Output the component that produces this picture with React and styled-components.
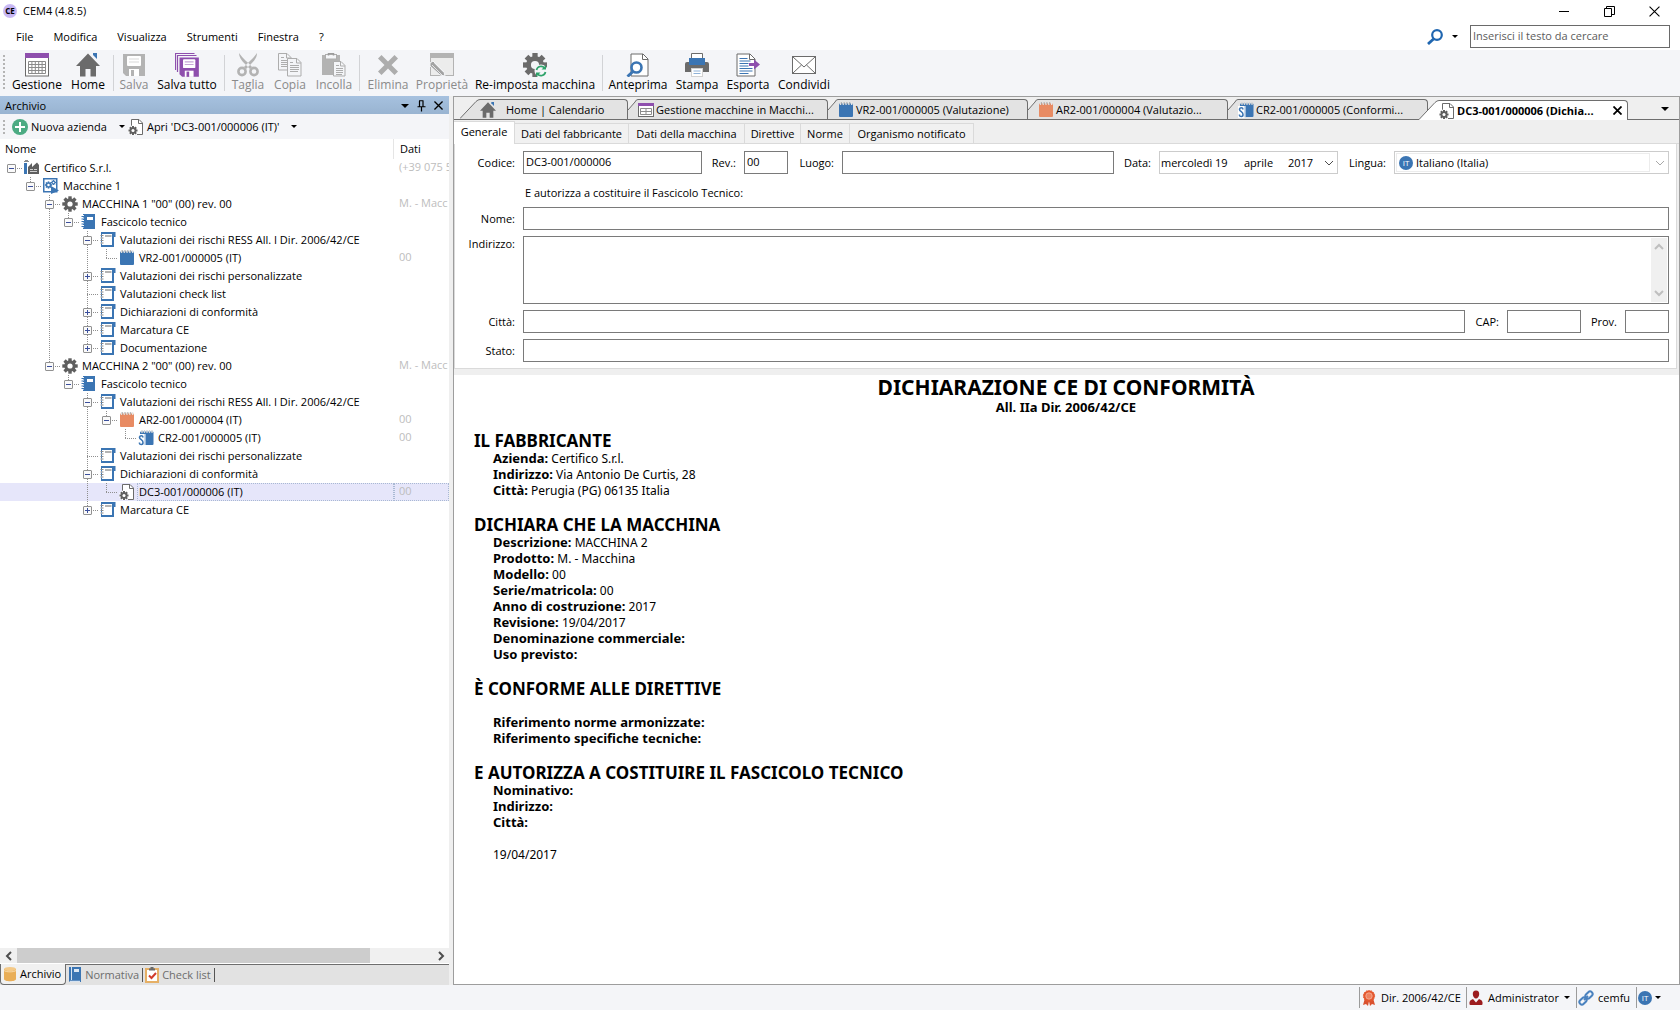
import { useState } from "react";
import styled, { createGlobalStyle, css } from "styled-components";

const UI_FONT = '"Open Sans", "Noto Sans", sans-serif';
const DOC_FONT = '"Noto Sans", "DejaVu Sans", sans-serif';

const BLUE = '#3b75b3';
const GREY = '#6b6b6b';
const LIGHT = '#b3b3b3';
const PURPLE = '#8e4fad';

const GlobalStyle = createGlobalStyle`
  *, *::before, *::after { box-sizing: border-box; }
  body {
    margin: 0;
    font: 11px/16px ${UI_FONT};
    color: #000;
    background: #fff;
  }
  button, input, textarea, select {
    font: inherit;
    color: inherit;
    margin: 0;
    padding: 0;
    border: 0;
    border-radius: 0;
    background: none;
    outline: none;
  }
  button { cursor: default; white-space: nowrap; }
  svg { display: block; flex: none; }
`

/* ---------- icons ---------- */

function Svg({ s = 16, w, h, box, children }){
  return (
    <svg width={w || s} height={h || s} viewBox={box || `0 0 ${w || s} ${h || s}`} fill="none" aria-hidden="true">
      {children}
    </svg>
  );
}

// cx, cy : centro, r : raggio esterno
function GearShape({ cx, cy, r, hole = '#fff', fill = '#5f5f5f' }){
  return (
    <g fill={fill}>
      {[0, 45, 90, 135].map((a) => (
        <rect key={a} x={cx - r * 0.22} y={cy - r} width={r * 0.44} height={r * 2} transform={`rotate(${a} ${cx} ${cy})`} />
      ))}
      <circle cx={cx} cy={cy} r={r * 0.74} />
      <circle cx={cx} cy={cy} r={r * 0.34} fill={hole} />
    </g>
  );
}

const CalendarIcon = () => (
  <Svg s={24}>
    <rect x="0.5" y="0.5" width="23" height="22.5" fill="#fff" stroke={GREY} />
    <rect width="24" height="5" fill={PURPLE} />
    <path d="M3.5 8.5h17v12h-17zM3.5 11.5h17M3.5 14.5h17M3.5 17.5h17M6.9 8.5v12M10.3 8.5v12M13.7 8.5v12M17.1 8.5v12" stroke="#8b8b8b" />
  </Svg>
)

const HomeIcon = ({ s = 24 }) => (
  <Svg s={s} box="0 0 24 24">
    <path d="M17 0h4v6l-4-4z" fill={BLUE} />
    <path d="M12 0.5L24 13h-4v10.5h-5.500V16h-5v7.500H4V13H0z" fill={GREY} />
  </Svg>
)

const Floppy = ({ color, x = 0, y = 0, k = 1 }) => (
  <g transform={`translate(${x} ${y}) scale(${k})`}>
    <path d="M0 0h22v22H3l-3-3z" fill={color} />
    <rect x="4" y="2" width="14" height="10" rx="1" fill="#fff" />
    <path d="M6 5h10M6 8h10" stroke={color} strokeOpacity="0.5" strokeWidth="1.2" />
    <rect x="6" y="15" width="10" height="7" fill="#fff" />
    <rect x="8" y="16" width="3" height="6" fill={color} />
  </g>
)

const SaveIcon = () => <Svg s={24}><Floppy color={LIGHT} x={1} y={1} /></Svg>

const SaveAllIcon = () => (
  <Svg s={24}>
    <path d="M0.500 17V0.500h19M2.500 19V2.500h19" stroke={PURPLE} strokeWidth="1.200" />
    <Floppy color={PURPLE} x={4.500} y={4.500} k={0.880} />
  </Svg>
)

const CutIcon = () => (
  <Svg s={24}>
    <path d="M3 0c0 4 2 7 6 11l5 5 2-2C12 9 7 6 3 0zM21 0c0 4-2 7-6 11l-5 5-2-2c4-5 9-8 13-14z" fill={LIGHT} />
    <circle cx="6" cy="18.500" r="3.600" stroke={LIGHT} strokeWidth="2.600" />
    <circle cx="18" cy="18.500" r="3.600" stroke={LIGHT} strokeWidth="2.600" />
  </Svg>
)

const Sheet = ({ x, y, w = 13, h = 17 }) => (
  <g transform={`translate(${x} ${y})`}>
    <path d={`M0.500 0.500H${w - 4}L${w} 4.500V${h}H0.500z`} fill="#f4f5f8" stroke="#adadad" />
    <path d={`M${w - 4.500} 0.500v4.500h4.500M3 7.500h${w - 5}M3 9.500h${w - 5}M3 11.500h${w - 5}M3 13.500h${w - 6}M3 4.500h3`} stroke="#adadad" />
  </g>
)

const CopyIcon = () => <Svg s={24}><Sheet x={0} y={0} /><Sheet x={9} y={5} w={14} h={18} /></Svg>

const PasteIcon = () => (
  <Svg s={24}>
    <rect x="0" y="2" width="18" height="20" fill={LIGHT} />
    <rect x="3.500" y="1.500" width="11" height="4.500" fill="#f4f5f8" stroke="#adadad" />
    <path d="M6.500 2.500V0.500h5v2" stroke="#9b9b9b" strokeWidth="1.500" />
    <Sheet x={11} y={8} w={12} h={15} />
  </Svg>
)

const DeleteIcon = () => (
  <Svg s={24}>
    <path d="M5.500 2L12 8.500 18.500 2 22 5.500 15.500 12 22 18.500 18.500 22 12 15.500 5.500 22 2 18.500 8.500 12 2 5.500z" fill="#adadad" />
  </Svg>
)

const PropertiesIcon = () => (
  <Svg s={24}>
    <rect x="0.500" y="0.500" width="23" height="22" fill="#ececec" stroke={LIGHT} />
    <rect width="24" height="5" fill={LIGHT} />
    <path d="M0 10l3-2 11 11 1 4-5-1L0 13z" fill="#a3a3a3" stroke="#f4f5f8" />
    <path d="M2 12l10 10M4.500 10l9 9" stroke="#f4f5f8" strokeWidth="0.800" />
  </Svg>
)

const ResetIcon = () => (
  <Svg s={24}>
    <GearShape cx={12} cy={12} r={12} hole="#f4f5f8" fill={GREY} />
    <circle cx="18" cy="18" r="6.500" fill="#f4f5f8" />
    <path d="M13.500 17a4.600 4.600 0 0 1 8-2M22.500 19a4.600 4.600 0 0 1-8 2" stroke="#2fa36b" strokeWidth="1.700" />
    <path d="M23 12v4.500h-4.500zM13 24v-4.500h4.500z" fill="#2fa36b" />
  </Svg>
)

const PreviewIcon = () => (
  <Svg s={24}>
    <path d="M5 1h12l5 5v17H5z" fill="#fff" stroke={GREY} />
    <path d="M16.500 1v5.500H22" stroke={GREY} />
    <circle cx="10.500" cy="14.500" r="5" fill="#fff" stroke={BLUE} strokeWidth="2.600" />
    <path d="M7 18.500L1.500 23.500" stroke={BLUE} strokeWidth="3" />
  </Svg>
)

const PrintIcon = () => (
  <Svg s={24}>
    <path d="M6.500 6V0.500h11V6" fill="#fff" stroke={GREY} />
    <path d="M2 9h20q2 0 2 2v8H0v-8q0-2 2-2z" fill={GREY} />
    <rect x="4" y="5" width="16" height="7" fill={BLUE} />
    <rect x="6.500" y="15.500" width="11" height="8" fill="#fff" stroke="#d2d2d2" />
    <path d="M8.500 18h7M8.500 20.500h7" stroke="#8fb2d8" />
  </Svg>
)

const ExportIcon = () => (
  <Svg s={24}>
    <path d="M1 1h13l5 5v17H1z" fill="#fff" stroke={GREY} />
    <path d="M13.500 1v5.500H19" stroke={GREY} />
    <path d="M3.500 5.500h8M3.500 8h11M3.500 10.500h9M3.500 13h9M3.500 15.500h13M3.500 18h13M3.500 20.500h9" stroke={BLUE} />
    <path d="M13 10h5V6.500l6 5-6 5V13h-5z" fill={PURPLE} />
  </Svg>
)

const MailIcon = () => (
  <Svg s={24}>
    <rect x="0.500" y="3.500" width="23" height="17" fill="#fff" stroke={GREY} />
    <path d="M1 4l11 10L23 4M1 20l8.500-8M23 20l-8.500-8" stroke={GREY} />
  </Svg>
)

const SearchIcon = () => (
  <Svg s={16}>
    <circle cx="10" cy="6" r="4.800" stroke="#1f66b0" strokeWidth="2.200" />
    <path d="M6.500 10L1 15" stroke="#1f66b0" strokeWidth="2.800" />
  </Svg>
)

const PlusIcon = () => (
  <Svg s={16}>
    <circle cx="8" cy="8" r="8" fill="#4cab83" />
    <path d="M8 3v10M3 8h10" stroke="#fff" strokeWidth="2" />
  </Svg>
)

const DocGearIcon = () => (
  <Svg s={16}>
    <path d="M3.500 8V0.500h7.500L14.500 4v11.500H9" fill="#fff" stroke={GREY} />
    <path d="M10.500 0.500V4.500h4" stroke={GREY} />
    <circle cx="5" cy="11.500" r="5" fill="#fff" />
    <GearShape cx={5} cy={11.500} r={4.500} />
  </Svg>
)

const FactoryIcon = () => (
  <Svg s={16}>
    <rect x="0" y="3" width="3" height="11" fill={BLUE} />
    <path d="M0 1.500h5M1 0.500h3" stroke="#8d8d8d" />
    <path d="M4 14V7l4-4v4l5-4.500L15 5v9z" fill="#5f5f5f" />
    <path d="M6 9.500h3M10 9.500h3M6 11.500h7" stroke="#cfcfcf" />
  </Svg>
)

const MachinesIcon = () => (
  <Svg s={16}>
    <rect x="0.750" y="0.750" width="13" height="13" fill="#fff" stroke={BLUE} strokeWidth="1.500" />
    <GearShape cx={5.500} cy={7} r={3.600} fill={BLUE} />
    <GearShape cx={10.500} cy={4.500} r={2.500} fill={BLUE} />
    <path d="M8 8l8 4.500L8 16z" fill={BLUE} />
  </Svg>
)

const GearIcon = () => <Svg s={16}><GearShape cx={8} cy={8} r={7.700} /></Svg>

const BookIcon = () => (
  <Svg s={16}>
    <rect x="2" y="0" width="12" height="15" fill={BLUE} />
    <path d="M2.500 1v13" stroke="#fff" strokeDasharray="1.500 1" />
    <path d="M0.500 2.500h3M0.500 5h3M0.500 7.500h3M0.500 10h3M0.500 12.500h3" stroke={BLUE} />
    <rect x="6" y="3" width="6" height="3" fill="#fff" />
  </Svg>
)

const NotebookIcon = () => (
  <Svg s={16}>
    <path d="M1 0h14.500v5H14v10H1z" fill={BLUE} />
    <path d="M2 2h10v11H2z" fill="#fff" />
    <path d="M0 3h3.500v1H0zM0 5.500h3.500v1H0zM0 8h3.500v1H0zM0 10.500h3.500v1H0z" fill="#fff" />
    <path d="M0.500 3.500h3M0.500 6h3M0.500 8.500h3M0.500 11h3" stroke="#8a8a8a" />
    <path d="M5 4h6.500" stroke="#9a9a9a" strokeWidth="1.500" />
  </Svg>
)

const NotepadIcon = ({ color = BLUE }) => (
  <Svg s={16}>
    <rect x="1" y="1.500" width="14" height="13.500" rx="1" fill={color} />
    <path d="M2.500 0v3M5.300 0v3M8.100 0v3M10.900 0v3M13.700 0v3" stroke="#e9e9e9" strokeWidth="1.300" />
    <path d="M3.300 0v2.500M6.100 0v2.500M8.900 0v2.500M11.700 0v2.500" stroke="#8d8d8d" strokeWidth="0.700" />
  </Svg>
)

const CorrectedIcon = () => (
  <Svg s={16}>
    <rect x="2" y="1.500" width="13.500" height="13.500" rx="1" fill={BLUE} />
    <path d="M4 0v3M6.500 0v3M9 0v3M11.500 0v3M14 0v3" stroke="#d5d5d5" strokeWidth="1.300" />
    <rect x="0" y="4" width="6.500" height="12" fill="#fff" />
    <path d="M4.800 7.500V6.800Q4.800 5.800 3.300 5.800T1.500 7.200Q1.500 8.500 3.300 9.700T5 12.800Q5 14.500 3.300 14.500T1.500 13.500V12.500" stroke={BLUE} strokeWidth="1.600" />
    <path d="M7 4v11" stroke="#fff" />
  </Svg>
)

const GridIcon = () => (
  <Svg s={16}>
    <rect x="0.500" y="1.500" width="15" height="13" fill="#fff" stroke={GREY} />
    <rect x="0" y="1" width="16" height="3" fill={PURPLE} />
    <path d="M2.500 6.500h11v6h-11zM2.500 9.500h11M8 6.500v6" stroke="#8d8d8d" />
  </Svg>
)

const DrumIcon = () => (
  <Svg w={14} h={16}>
    <path d="M1 3v10c0 3 12 3 12 0V3z" fill="#e9ae57" />
    <ellipse cx="7" cy="3" rx="6" ry="2" fill="#f4c987" />
    <path d="M1 4.500c2 1.800 10 1.800 12 0" stroke="#fbe3bd" strokeWidth="0.800" />
  </Svg>
)

const RulesIcon = () => (
  <Svg w={14} h={16}>
    <path d="M1 0h12v15H2.500Q1 15 1 13.500z" fill={BLUE} />
    <path d="M3.500 0v13" stroke="#fff" strokeWidth="0.800" />
    <path d="M2 14.300h10" stroke="#fff" strokeWidth="1" />
    <rect x="6" y="2" width="5" height="3" fill="#dce7f3" />
  </Svg>
)

const ChecklistIcon = () => (
  <Svg w={14} h={16}>
    <rect x="1" y="2" width="12" height="13" fill="#fff" stroke="#e6b066" strokeWidth="2" />
    <path d="M4 1.500h6V3.500H4z" fill={GREY} /><path d="M5.500 0h3v2h-3z" fill={GREY} />
    <path d="M4 8.500l2.500 2.500L11 6" stroke="#d13b2c" strokeWidth="2" />
  </Svg>
)

const RibbonIcon = () => (
  <Svg w={14} h={16}>
    <path d="M3 8l-2 7 3-1 2 2 1-5 1 5 2-2 3 1-2-7z" fill="#d9512f" />
    <circle cx="7" cy="6" r="5.600" fill="#e4572e" stroke="#e4572e" strokeDasharray="1.500 1" />
    <circle cx="7" cy="6" r="3.200" fill="#ee8260" stroke="#f6b39c" strokeWidth="0.800" />
  </Svg>
)

const UserIcon = () => (
  <Svg w={14} h={16}>
    <path d="M7 0.500c2.300 0 3.400 1.600 3.200 3.800C10 6.800 8.600 8.500 7 8.500S4 6.800 3.800 4.300C3.600 2.100 4.700 0.500 7 0.500z" fill="#9c1c1f" />
    <path d="M0.500 12q0.300-2 3.500-3l3 3.500L10 9q3.200 1 3.500 3v2q0 1-1 1h-11q-1 0-1-1z" fill="#9c1c1f" />
  </Svg>
)

const LinkIcon = () => (
  <Svg s={16}>
    <g stroke="#4a82bf" strokeWidth="2">
      <rect x="7" y="2.500" width="8" height="5" rx="2.500" transform="rotate(-45 11 5)" />
      <rect x="1" y="8.500" width="8" height="5" rx="2.500" transform="rotate(-45 5 11)" />
      <path d="M6 10l4-4" />
    </g>
  </Svg>
)

const PinIcon = () => (
  <Svg w={9} h={12}>
    <path d="M2.500 1v5.500M2 0.750h4.500M6 1v5.500M0.500 6.750h8M4.500 7v4.500" stroke="#000" strokeWidth="1.200" />
  </Svg>
)

const CrossIcon = ({ s = 9, t = 1.500 }) => (
  <Svg s={s} box="0 0 10 10"><path d="M0.500 0.500l9 9M9.500 0.500l-9 9" stroke="#000" strokeWidth={t} /></Svg>
)

const Chevron = ({ dir = 'down', color = '#4d4d4d', t = 1 }) => {
  const turn = { down: 0, left: 90, up: 180, right: 270 }[dir];
  return (
    <Svg s={10}><path d="M1 3l4 4 4-4" stroke={color} strokeWidth={t} transform={`rotate(${turn} 5 5)`} /></Svg>
  );
}

const Caret = styled.span`
  flex: none;
  width: 0;
  height: 0;
  border: solid transparent;
  border-width: ${props => props.$big ? '4px 4px 0' : '3px 3px 0'};
  border-top-color: #000;
`

const Flag = styled.span`
  flex: none;
  width: 14px;
  height: 14px;
  border-radius: 50%;
  background: ${BLUE};
  color: #fff;
  font: 8px/14px ${UI_FONT};
  text-align: center;
`

/* ---------- window ---------- */

const Window = styled.div`
  display: flex;
  flex-direction: column;
  min-height: 100vh;
  background: #fff;
`

const TitleBar = styled.header`
  display: flex;
  align-items: center;
  gap: 6px;
  height: 22px;
  padding: 0 3px;
`

const AppLogo = styled.span`
  width: 14px;
  height: 14px;
  border-radius: 50%;
  background: radial-gradient(#b9a5ef, #d3c6f7);
  font: bold 8px/14px ${UI_FONT};
  text-align: center;
`

const WindowTitle = styled.h1`
  flex: 1;
  margin: 0;
  font-size: 11px;
  font-weight: normal;
`

const WindowButtons = styled.div`
  display: flex;
`

const WindowButton = styled.button`
  display: grid;
  place-items: center;
  width: 45px;
  height: 20px;
`

const MenuBar = styled.nav`
  display: flex;
  align-items: center;
  height: 28px;
  padding: 1px 10px 0 16px;
`

const MenuList = styled.div`
  flex: 1;
  display: flex;
  gap: 20px;
`

const SearchButton = styled.button`
  display: flex;
  align-items: center;
  gap: 9px;
  margin-right: 12px;
`

const SearchInput = styled.input`
  width: 200px;
  height: 23px;
  padding: 0 2px 3px;
  border: 1px solid #6a6a6a;
  &::placeholder { color: #5c5c5c; opacity: 1; }
`

const Toolbar = styled.div`
  display: flex;
  align-items: center;
  height: 46px;
  padding-left: 3px;
  background: #f4f5f8;
`

const Grip = styled.span`
  flex: none;
  width: 2px;
  height: ${props => props.$h}px;
  margin-right: 4px;
  background: repeating-linear-gradient(#b4b4b4 0 2px, transparent 2px 4px);
`

const ToolSeparator = styled.span`
  width: 1px;
  height: 36px;
  margin: 0 2px;
  background: #d2d3d6;
`

const ToolButton = styled.button`
  display: flex;
  flex-direction: column;
  align-items: center;
  width: ${props => props.$w}px;
  font-size: 12px;
  color: #000;
  &:disabled { color: #8a8a8a; }
`

const Workspace = styled.main`
  flex: 1;
  display: flex;
  gap: 4px;
  background: #efefef;
`

/* ---------- archivio ---------- */

const Side = styled.aside`
  flex: none;
  display: flex;
  flex-direction: column;
  width: 449px;
  background: #fff;
`

const SideHeader = styled.div`
  display: flex;
  align-items: center;
  gap: 8px;
  height: 18px;
  padding: 1px 6px 0 5px;
  background: linear-gradient(#a6c1df, #99b4d1);
  h2 {
    flex: 1;
    margin: 0;
    font-size: 11px;
    font-weight: normal;
  }
  button { display: grid; place-items: center; }
`

const SideTools = styled.div`
  display: flex;
  align-items: center;
  gap: 3px;
  height: 25px;
  padding-left: 3px;
  background: #f4f5f8;
`

const SideTool = styled.button`
  display: flex;
  align-items: center;
  gap: 3px;
  ${Caret} { margin-left: 9px; }
`

const Tree = styled.div`
  flex: 1;
  overflow: hidden;
`

const TreeLine = styled.div`
  display: grid;
  grid-template-columns: 394px 1fr;
`

const TreeHead = styled(TreeLine)`
  height: 20px;
  line-height: 20px;
  span:first-child { padding-left: 5px; border-right: 1px solid #e5e5e5; }
  span:last-child { padding-left: 6px; }
`

const dots = (dir) => css`repeating-linear-gradient(${dir}, #8f8f8f 0 1px, transparent 1px 2px)`

const TreeRow = styled(TreeLine)`
  height: 18px;
  background: ${props => props.$selected ? '#e6e6fa' : 'none'};
`

const NameCell = styled.div`
  display: flex;
  align-items: center;
  padding-left: 2px;
  white-space: nowrap;
`

const Guide = styled.span`
  flex: none;
  width: 19px;
  height: 18px;
  background: ${props => props.$on ? css`${dots('to bottom')} 9px 0 / 1px 18px no-repeat` : 'none'};
`

const Joint = styled.span`
  flex: none;
  display: flex;
  align-items: center;
  width: 22px;
  height: 18px;
  padding-left: 5px;
  background:
    ${dots('to right')} 9px 9px / 11px 1px no-repeat,
    ${dots('to bottom')} 9px ${props => props.$first ? 9 : 0}px / 1px ${props => (props.$last ? 9 : 18) - (props.$first ? 9 : 0)}px no-repeat;
`

const Expander = styled.button`
  display: grid;
  place-items: center;
  width: 9px;
  height: 9px;
  border: 1px solid #919191;
  border-radius: 1px;
  background: #fafafa;
`

const NodeName = styled.span`
  flex: 1;
  align-self: stretch;
  margin-left: 2px;
  padding-left: 2px;
  line-height: 18px;
  outline: ${props => props.$selected ? '1px dotted #a9b9d3' : 'none'};
  outline-offset: -1px;
`

const DataCell = styled.div`
  padding-left: 5px;
  overflow: hidden;
  line-height: 16px;
  color: #bdbdbd;
  white-space: nowrap;
  outline: ${props => props.$selected ? '1px dotted #a9b9d3' : 'none'};
  outline-offset: -1px;
`

const ScrollTrack = styled.div`
  display: flex;
  height: 15px;
  background: #f0f0f0;
  button { display: grid; place-items: center; width: 17px; }
`

const ScrollRail = styled.div`
  flex: 1;
  &::before {
    content: "";
    display: block;
    width: 85%;
    height: 100%;
    background: #cdcdcd;
  }
`

const SideTabs = styled.div`
  display: flex;
  height: 21px;
  margin-top: 1px;
  border-top: 1px solid #6e6e6e;
  background: #e2e2e2;
`

const SideTab = styled.button`
  display: flex;
  align-items: center;
  gap: 3px;
  padding: 0 4px 0 2px;
  color: #6d6d6d;
  position: relative;
  &::after {
    content: "";
    position: absolute;
    right: 0;
    top: 3px;
    width: 1px;
    height: 14px;
    background: #555;
  }
  ${props => props.$active && css`
    margin-top: -1px;
    color: #000;
    background: #f1f1f1;
    border: 1px solid #6e6e6e;
    border-top: 0;
    border-radius: 0 0 4px 4px;
    &::after { display: none; }
  `}
`

/* ---------- documenti ---------- */

const Editor = styled.section`
  flex: 1;
  min-width: 0;
  display: flex;
  flex-direction: column;
  border: 1px solid #9d9d9d;
  background: #fff;
`

const DocTabs = styled.div`
  display: flex;
  align-items: flex-end;
  height: 23px;
  padding-left: 6px;
  border-bottom: 1px solid #6e6e6e;
  background: #efefef;
`

const DocTab = styled.div`
  flex: 0 1 ${props => props.$w}px;
  min-width: 0;
  display: flex;
  height: 20px;
  ${props => props.$active && css`
    position: relative;
    margin: 0 0 -1px -9px;
    font-weight: bold;
    z-index: 1;
  `}
`

const DocTabBody = styled.div`
  flex: 1;
  min-width: 0;
  display: flex;
  align-items: center;
  padding-right: 5px;
  border: 1px solid #6e6e6e;
  border-width: 1px 1px 0 0;
  border-radius: 0 4px 0 0;
  background: ${props => props.$active ? '#fff' : '#e3e3e3'};
`

const DocTabName = styled.button`
  flex: 1;
  min-width: 0;
  display: flex;
  align-items: center;
  gap: ${props => props.$gap || 2}px;
  overflow: hidden;
  font-weight: inherit;
`

const TabMenu = styled.button`
  display: grid;
  place-items: center;
  width: 28px;
  height: 20px;
  margin-left: auto;
`

const Pages = styled.div`
  display: flex;
  align-items: flex-end;
  height: 24px;
  background: #efefef;
`

const PageTab = styled.button`
  width: ${props => props.$w}px;
  height: ${props => props.$active ? 23 : 21}px;
  border: 1px solid #dadada;
  border-width: 1px 1px 1px 0;
  background: #f1f1f1;
  ${props => props.$active && css`
    padding-bottom: 2px;
    background: #fff;
    border-bottom: 0;
  `}
`

const PagesRest = styled.span`
  flex: 1;
  border-bottom: 1px solid #dadada;
`

const FormArea = styled.div`
  padding: 0 2px 6px 0;
  background: #efefef;
`

const Form = styled.form`
  display: flex;
  flex-direction: column;
  gap: 6px;
  padding: 7px 7px 6px 1px;
  border: 1px solid #dadada;
  border-top: 0;
  background: #fff;
`

const FormRow = styled.div`
  display: flex;
  align-items: center;
  gap: 8px;
`

const Label = styled.label`
  flex: none;
  width: ${props => props.$w || 59}px;
  align-self: ${props => props.$top ? 'flex-start' : 'auto'};
  display: flex;
  justify-content: flex-end;
  white-space: nowrap;
`

const Hint = styled.p`
  margin: 5px 0 0 69px;
  line-height: 16px;
`

const Field = styled.input`
  flex: ${props => props.$w ? `0 0 ${props.$w}px` : '1 1 0'};
  min-width: 0;
  height: 23px;
  padding: 0 2px 2px;
  border: 1px solid #7a7a7a;
  background: #fff;
`

const AreaBox = styled.div`
  flex: 1;
  display: flex;
  height: 68px;
  padding: 1px;
  border: 1px solid #7a7a7a;
`

const Area = styled.textarea`
  flex: 1;
  resize: none;
`

const AreaScroll = styled.div`
  display: flex;
  flex-direction: column;
  justify-content: space-between;
  align-items: center;
  width: 16px;
  padding: 4px 0;
  background: #f0f0f0;
`

const PickerBox = styled.div`
  flex: none;
  display: flex;
  align-items: center;
  width: ${props => props.$w}px;
  height: 23px;
  padding: 0 3px 0 1px;
  border: 1px solid #cccccc;
  background: #fff;
`

const DatePart = styled.input`
  width: ${props => props.$w}px;
  min-width: 0;
`

const LangInner = styled.div`
  flex: 1;
  display: flex;
  align-items: center;
  gap: 3px;
  height: 19px;
  margin-right: 5px;
  padding-left: 2px;
  border: 1px solid #ececec;
`

const LangSelect = styled.select`
  flex: 1;
  appearance: none;
`

const Report = styled.article`
  flex: 1;
  padding: 0 21px 16px 20px;
  font: 12px/16px ${DOC_FONT};
  b {
    font-size: 13px;
    line-height: 14px;
  }
`

const ReportTitle = styled.h2`
  margin: 0;
  font-size: 21px;
  line-height: 24px;
  text-align: center;
`

const ReportSub = styled.p`
  margin: 0 0 16px;
  font-size: 13px;
  font-weight: bold;
  text-align: center;
`

const ReportSection = styled.section`
  margin-bottom: 16px;
  h3 {
    margin: 0 0 ${props => props.$space ? 16 : 0}px;
    font-size: 17px;
    line-height: 20px;
  }
  p { margin: 0 0 0 19px; }
`

/* ---------- barra di stato ---------- */

const StatusBar = styled.footer`
  display: flex;
  justify-content: flex-end;
  align-items: center;
  height: 25px;
  padding-right: 10px;
  background: #f4f5f8;
`

const StatusItem = styled.button`
  flex: none;
  display: flex;
  align-items: center;
  gap: ${props => props.$gap || 5}px;
  width: ${props => props.$w}px;
  height: 21px;
  padding-left: ${props => props.$gap ? 1 : 2}px;
  border-left: 1px solid #9b9b9b;
`

/* ---------- data ---------- */

const tools = [
  { name: 'Gestione', icon: <CalendarIcon />, w: 56 },
  { name: 'Home', icon: <HomeIcon />, w: 46 },
  null,
  { name: 'Salva', icon: <SaveIcon />, w: 36, off: true },
  { name: 'Salva tutto', icon: <SaveAllIcon />, w: 70 },
  null,
  { name: 'Taglia', icon: <CutIcon />, w: 42, off: true },
  { name: 'Copia', icon: <CopyIcon />, w: 42, off: true },
  { name: 'Incolla', icon: <PasteIcon />, w: 46, off: true },
  null,
  { name: 'Elimina', icon: <DeleteIcon />, w: 52, off: true },
  { name: 'Proprietà', icon: <PropertiesIcon />, w: 56, off: true },
  { name: 'Re-imposta macchina', icon: <ResetIcon />, w: 130 },
  null,
  { name: 'Anteprima', icon: <PreviewIcon />, w: 66 },
  { name: 'Stampa', icon: <PrintIcon />, w: 52 },
  { name: 'Esporta', icon: <ExportIcon />, w: 50 },
  { name: 'Condividi', icon: <MailIcon />, w: 62 },
]

// d : profondità, box : '-' aperto, '+' chiuso
const nodes = [
  { d: 0, box: '-', icon: <FactoryIcon />, name: 'Certifico S.r.l.', data: '(+39 075 5' },
  { d: 1, box: '-', icon: <MachinesIcon />, name: 'Macchine 1' },
  { d: 2, box: '-', icon: <GearIcon />, name: 'MACCHINA 1 "00" (00) rev. 00', data: 'M. - Macc' },
  { d: 3, box: '-', icon: <BookIcon />, name: 'Fascicolo tecnico' },
  { d: 4, box: '-', icon: <NotebookIcon />, name: 'Valutazioni dei rischi RESS All. I Dir. 2006/42/CE' },
  { d: 5, icon: <NotepadIcon />, name: 'VR2-001/000005 (IT)', data: '00' },
  { d: 4, box: '+', icon: <NotebookIcon />, name: 'Valutazioni dei rischi personalizzate' },
  { d: 4, icon: <NotebookIcon />, name: 'Valutazioni check list' },
  { d: 4, box: '+', icon: <NotebookIcon />, name: 'Dichiarazioni di conformità' },
  { d: 4, box: '+', icon: <NotebookIcon />, name: 'Marcatura CE' },
  { d: 4, box: '+', icon: <NotebookIcon />, name: 'Documentazione' },
  { d: 2, box: '-', icon: <GearIcon />, name: 'MACCHINA 2 "00" (00) rev. 00', data: 'M. - Macc' },
  { d: 3, box: '-', icon: <BookIcon />, name: 'Fascicolo tecnico' },
  { d: 4, box: '-', icon: <NotebookIcon />, name: 'Valutazioni dei rischi RESS All. I Dir. 2006/42/CE' },
  { d: 5, box: '-', icon: <NotepadIcon color="#e88b63" />, name: 'AR2-001/000004 (IT)', data: '00' },
  { d: 6, icon: <CorrectedIcon />, name: 'CR2-001/000005 (IT)', data: '00' },
  { d: 4, icon: <NotebookIcon />, name: 'Valutazioni dei rischi personalizzate' },
  { d: 4, box: '-', icon: <NotebookIcon />, name: 'Dichiarazioni di conformità' },
  { d: 5, icon: <DocGearIcon />, name: 'DC3-001/000006 (IT)', data: '00' },
  { d: 4, box: '+', icon: <NotebookIcon />, name: 'Marcatura CE' },
]

// true se sotto la riga i c'è ancora un fratello al livello d
function continues(i, d){
  let next = nodes.slice(i + 1).find((n) => n.d <= d);
  return next !== undefined && next.d === d;
}

const docTabs = [
  { name: 'Home | Calendario', icon: <HomeIcon s={16} />, w: 168, gap: 10, full: true },
  { name: 'Gestione macchine in Macchi...', icon: <GridIcon />, w: 200 },
  { name: 'VR2-001/000005 (Valutazione)', icon: <NotepadIcon />, w: 200 },
  { name: 'AR2-001/000004 (Valutazio...', icon: <NotepadIcon color="#e88b63" />, w: 200 },
  { name: 'CR2-001/000005 (Conformi...', icon: <CorrectedIcon />, w: 200 },
  { name: 'DC3-001/000006 (Dichia...', icon: <DocGearIcon />, w: 209, full: true, active: true },
]

const pages = [
  ['Generale', 61], ['Dati del fabbricante', 114], ['Dati della macchina', 116],
  ['Direttive', 56], ['Norme', 49], ['Organismo notificato', 124],
]

const report = [
  { title: 'IL FABBRICANTE', rows: [
    ['Azienda:', 'Certifico S.r.l.'],
    ['Indirizzo:', 'Via Antonio De Curtis, 28'],
    ['Città:', 'Perugia (PG) 06135 Italia'],
  ]},
  { title: 'DICHIARA CHE LA MACCHINA', rows: [
    ['Descrizione:', 'MACCHINA 2'],
    ['Prodotto:', 'M. - Macchina'],
    ['Modello:', '00'],
    ['Serie/matricola:', '00'],
    ['Anno di costruzione:', '2017'],
    ['Revisione:', '19/04/2017'],
    ['Denominazione commerciale:'],
    ['Uso previsto:'],
  ]},
  { title: 'È CONFORME ALLE DIRETTIVE', space: true, rows: [
    ['Riferimento norme armonizzate:'],
    ['Riferimento specifiche tecniche:'],
  ]},
  { title: 'E AUTORIZZA A COSTITUIRE IL FASCICOLO TECNICO', rows: [
    ['Nominativo:'], ['Indirizzo:'], ['Città:'],
  ]},
]

/* ---------- components ---------- */

function ArchivePanel(){
  let [selected, setSelected] = useState(18);

  return (
    <Side>
      <SideHeader>
        <h2>Archivio</h2>
        <button aria-label="Opzioni"><Caret $big /></button>
        <button aria-label="Blocca"><PinIcon /></button>
        <button aria-label="Chiudi pannello"><CrossIcon /></button>
      </SideHeader>
      <SideTools>
        <Grip $h={14} />
        <SideTool><PlusIcon />Nuova azienda<Caret /></SideTool>
        <SideTool><DocGearIcon />Apri 'DC3-001/000006 (IT)'<Caret /></SideTool>
      </SideTools>
      <Tree role="treegrid" aria-label="Archivio">
        <TreeHead role="row">
          <span role="columnheader">Nome</span>
          <span role="columnheader">Dati</span>
        </TreeHead>
        {
          nodes.map((n, i) => (
            <TreeRow key={i} role="row" aria-level={n.d + 1} $selected={i === selected} onClick={() => { setSelected(i) }}>
              <NameCell role="gridcell">
                {Array.from({ length: n.d }, (_, d) => <Guide key={d} $on={continues(i, d)} />)}
                <Joint $first={n.d === 0} $last={!continues(i, n.d)}>
                  {n.box &&
                    <Expander aria-label={n.box === '-' ? 'Comprimi' : 'Espandi'}>
                      <Svg s={7}><path d={n.box === '-' ? 'M1 3.500h5' : 'M1 3.500h5M3.500 1v5'} stroke="#3b4f9c" /></Svg>
                    </Expander>
                  }
                </Joint>
                {n.icon}
                <NodeName $selected={i === selected}>{n.name}</NodeName>
              </NameCell>
              <DataCell role="gridcell" $selected={i === selected}>{n.data}</DataCell>
            </TreeRow>
          ))
        }
      </Tree>
      <ScrollTrack>
        <button aria-label="Scorri a sinistra"><Chevron dir="left" t={2} /></button>
        <ScrollRail />
        <button aria-label="Scorri a destra"><Chevron dir="right" t={2} /></button>
      </ScrollTrack>
      <SideTabs>
        <SideTab $active><DrumIcon />Archivio</SideTab>
        <SideTab><RulesIcon />Normativa</SideTab>
        <SideTab><ChecklistIcon />Check list</SideTab>
      </SideTabs>
    </Side>
  );
}

function DocumentTab({ tab }){
  let bg = tab.active ? '#fff' : '#e3e3e3';
  return (
    <DocTab $w={tab.w} $active={tab.active}>
      {
        tab.full
        ? <Svg w={20} h={20}><path d="M0 19.500L16 2.500Q18 0.500 20 0.500V20H0z" fill={bg} /><path d="M0 19.500L16 2.500Q18 0.500 20 0.500" stroke="#6e6e6e" /></Svg>
        : <Svg w={10} h={20}><path d="M0 11L7 3Q8 0.500 10 0.500V20H0z" fill={bg} /><path d="M0 11L7 3Q8 0.500 10 0.500" stroke="#6e6e6e" /></Svg>
      }
      <DocTabBody $active={tab.active}>
        <DocTabName $gap={tab.gap}>{tab.icon}{tab.name}</DocTabName>
        {tab.active && <button aria-label="Chiudi scheda"><CrossIcon t={2} /></button>}
      </DocTabBody>
    </DocTab>
  );
}

function DeclarationForm(){
  let [code, setCode] = useState('DC3-001/000006');
  let [rev, setRev] = useState('00');

  return (
    <FormArea>
      <Form>
        <FormRow>
          <Label htmlFor="codice">Codice:</Label>
          <Field id="codice" $w={179} value={code} onChange={(e) => { setCode(e.target.value) }} />
          <Label $w={26} htmlFor="rev">Rev.:</Label>
          <Field id="rev" $w={44} value={rev} onChange={(e) => { setRev(e.target.value) }} />
          <Label $w={38} htmlFor="luogo">Luogo:</Label>
          <Field id="luogo" />
          <Label $w={29} htmlFor="giorno">Data:</Label>
          <PickerBox $w={179}>
            <DatePart id="giorno" $w={83} defaultValue="mercoledì 19" />
            <DatePart aria-label="Mese" $w={44} defaultValue="aprile" />
            <DatePart aria-label="Anno" $w={36} defaultValue="2017" />
            <Chevron />
          </PickerBox>
          <Label $w={40} htmlFor="lingua">Lingua:</Label>
          <PickerBox $w={275}>
            <LangInner>
              <Flag>IT</Flag>
              <LangSelect id="lingua"><option>Italiano (Italia)</option></LangSelect>
            </LangInner>
            <Chevron color="#a8a8a8" />
          </PickerBox>
        </FormRow>
        <Hint>E autorizza a costituire il Fascicolo Tecnico:</Hint>
        <FormRow>
          <Label htmlFor="nome">Nome:</Label>
          <Field id="nome" />
        </FormRow>
        <FormRow>
          <Label $top htmlFor="indirizzo">Indirizzo:</Label>
          <AreaBox>
            <Area id="indirizzo" />
            <AreaScroll>
              <Chevron dir="up" color="#bfbfbf" t={2} />
              <Chevron color="#bfbfbf" t={2} />
            </AreaScroll>
          </AreaBox>
        </FormRow>
        <FormRow>
          <Label htmlFor="citta">Città:</Label>
          <Field id="citta" />
          <Label $w={26} htmlFor="cap">CAP:</Label>
          <Field id="cap" $w={74} />
          <Label $w={28} htmlFor="prov">Prov.</Label>
          <Field id="prov" $w={44} />
        </FormRow>
        <FormRow>
          <Label htmlFor="stato">Stato:</Label>
          <Field id="stato" />
        </FormRow>
      </Form>
    </FormArea>
  );
}

function App(){
  let [page, setPage] = useState(0);

  return (
    <Window>
      <GlobalStyle />
      <TitleBar>
        <AppLogo>CE</AppLogo>
        <WindowTitle>CEM4 (4.8.5)</WindowTitle>
        <WindowButtons>
          <WindowButton aria-label="Riduci"><Svg s={11}><path d="M0 5.500h10" stroke="#000" /></Svg></WindowButton>
          <WindowButton aria-label="Ripristina">
            <Svg s={11}><path d="M0.500 2.500h7v8h-7zM2.500 2.500v-2h8v8h-3" stroke="#000" /></Svg>
          </WindowButton>
          <WindowButton aria-label="Chiudi"><CrossIcon s={11} t={1} /></WindowButton>
        </WindowButtons>
      </TitleBar>
      <MenuBar>
        <MenuList>
          {['File', 'Modifica', 'Visualizza', 'Strumenti', 'Finestra', '?'].map((m) => <button key={m}>{m}</button>)}
        </MenuList>
        <SearchButton aria-label="Cerca"><SearchIcon /><Caret /></SearchButton>
        <SearchInput aria-label="Cerca" placeholder="Inserisci il testo da cercare" />
      </MenuBar>
      <Toolbar>
        <Grip $h={36} />
        {
          tools.map((t, i) => t
            ? <ToolButton key={i} $w={t.w} disabled={t.off}>{t.icon}{t.name}</ToolButton>
            : <ToolSeparator key={i} />)
        }
      </Toolbar>
      <Workspace>
        <ArchivePanel />
        <Editor>
          <DocTabs>
            {docTabs.map((t) => <DocumentTab key={t.name} tab={t} />)}
            <TabMenu aria-label="Elenco schede"><Caret $big /></TabMenu>
          </DocTabs>
          <Pages>
            {pages.map(([name, w], i) => (
              <PageTab key={name} $w={w} $active={i === page} onClick={() => { setPage(i) }}>{name}</PageTab>
            ))}
            <PagesRest />
          </Pages>
          <DeclarationForm />
          <Report>
            <ReportTitle>DICHIARAZIONE CE DI CONFORMITÀ</ReportTitle>
            <ReportSub>All. IIa Dir. 2006/42/CE</ReportSub>
            {
              report.map((s) => (
                <ReportSection key={s.title} $space={s.space}>
                  <h3>{s.title}</h3>
                  {s.rows.map(([k, v]) => <p key={k}><b>{k}</b> {v}</p>)}
                </ReportSection>
              ))
            }
            <ReportSection><p>19/04/2017</p></ReportSection>
          </Report>
        </Editor>
      </Workspace>
      <StatusBar>
        <StatusItem $w={107}><RibbonIcon />Dir. 2006/42/CE</StatusItem>
        <StatusItem $w={110}><UserIcon />Administrator<Caret /></StatusItem>
        <StatusItem $w={60} $gap={4}><LinkIcon />cemfu</StatusItem>
        <StatusItem $w={34} $gap={3}><Flag>IT</Flag><Caret /></StatusItem>
      </StatusBar>
    </Window>
  );
}

export default App;
